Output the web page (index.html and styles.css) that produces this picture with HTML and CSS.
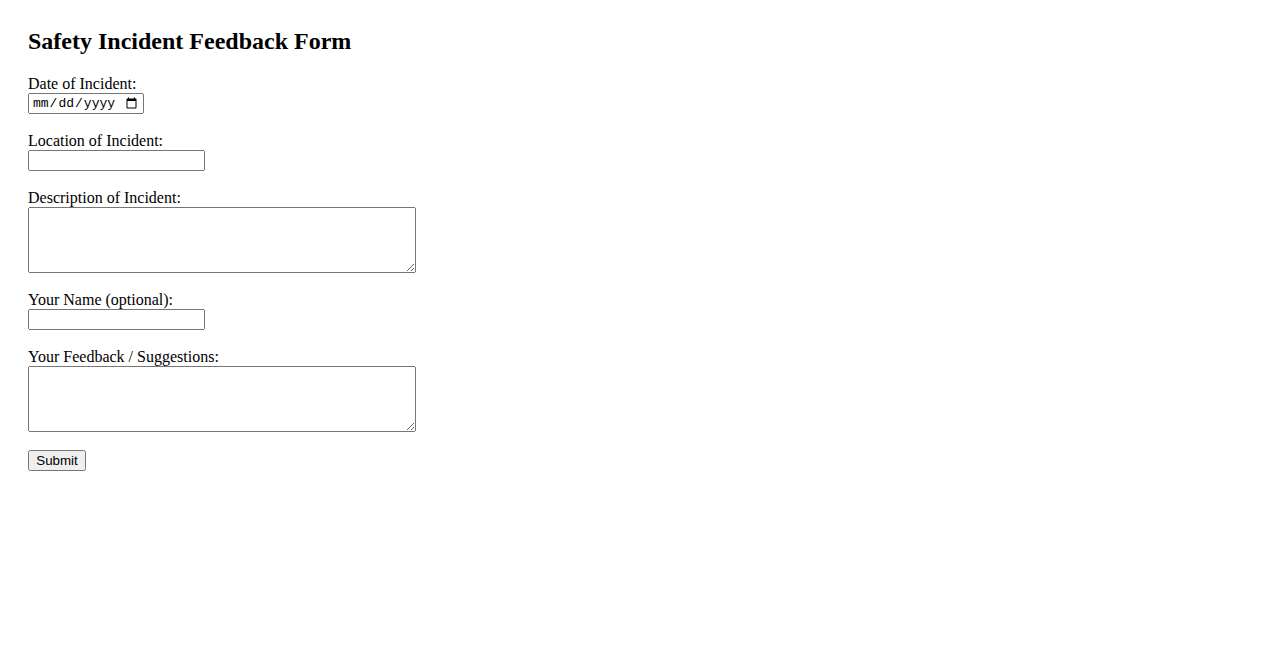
FILE: index.html
```html
<!DOCTYPE html>
<html>
<head>
<meta charset="utf-8">
<title>Safety Incident Feedback Form</title>
<link rel="stylesheet" href="styles.css">
</head>
<body>
<div class="container">
<h2 class="title">Safety Incident Feedback Form</h2>
<form class="form">
<label for="date">Date of Incident:</label><br>
<input type="date" id="date" name="date" class="date"><br><br>
<label for="location">Location of Incident:</label><br>
<input type="text" id="location" name="location" class="text"><br><br>
<label for="description">Description of Incident:</label><br>
<textarea id="description" name="description" rows="4" class="area"></textarea><br><br>
<label for="name">Your Name (optional):</label><br>
<input type="text" id="name" name="name" class="text"><br><br>
<label for="feedback">Your Feedback / Suggestions:</label><br>
<textarea id="feedback" name="feedback" rows="4" class="area"></textarea><br><br>
<input type="submit" value="Submit" class="submit">
</form>
</div>
</body>
</html>
```
FILE: styles.css
```css
body {
  margin: 8px;
  font-family: "Liberation Serif", "Times New Roman", serif;
}
.container {
  padding: 20px;
}
.title {
  margin-top: 0;
  font-family: "Liberation Serif", "Times New Roman", serif;
}
.date {
  width: 116px;
  height: 21px;
  box-sizing: border-box;
  font-family: "Liberation Mono", "DejaVu Sans Mono", monospace;
  font-size: 13px;
  padding: 1px 2px;
}
.text {
  width: 177px;
  height: 21px;
  box-sizing: border-box;
}
.area {
  width: 388px;
  height: 66px;
  box-sizing: border-box;
  vertical-align: bottom;
}
.submit {
  width: 58px;
  height: 21px;
  box-sizing: border-box;
  font-family: "Liberation Sans", Arial, sans-serif;
  font-size: 13.333px;
  padding: 1px 6px;
}
```
